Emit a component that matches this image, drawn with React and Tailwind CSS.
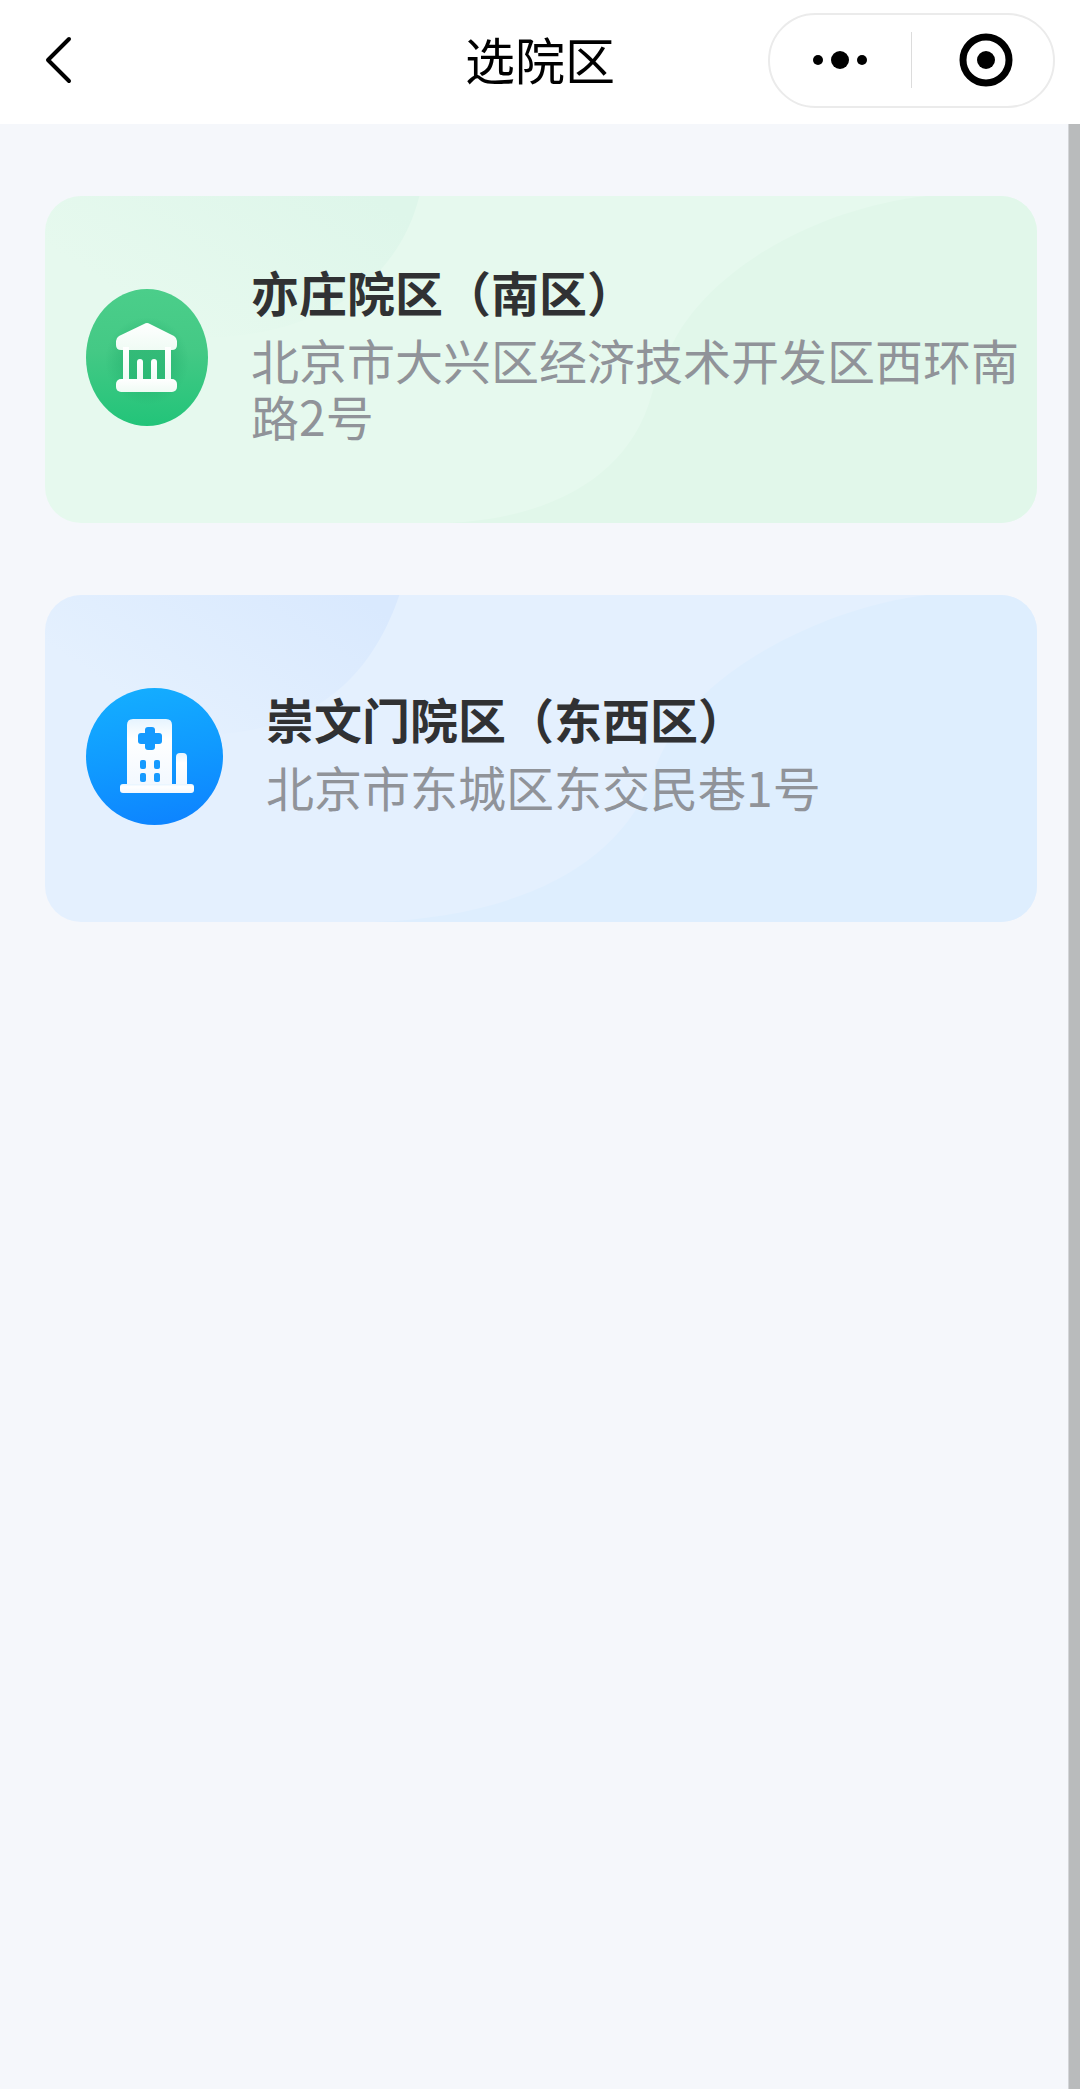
import React, { useState } from "react";

const BankIcon = () => (
  <svg
    viewBox="0 0 122 137"
    className="w-[122px] h-[137px] shrink-0"
    aria-hidden="true"
  >
    <defs>
      <linearGradient id="bankBg" x1="0" y1="0" x2="0" y2="1">
        <stop offset="0" stopColor="#4bce8a" />
        <stop offset="0.45" stopColor="#44c985" />
        <stop offset="1" stopColor="#22c479" />
      </linearGradient>
      <linearGradient id="bankFg" x1="0" y1="0" x2="0" y2="1">
        <stop offset="0" stopColor="#ffffff" />
        <stop offset="1" stopColor="#effbf4" />
      </linearGradient>
      <radialGradient id="bankShade">
        <stop offset="0.5" stopColor="#1fa968" stopOpacity="0.45" />
        <stop offset="1" stopColor="#1fa968" stopOpacity="0" />
      </radialGradient>
    </defs>
    <ellipse cx="61" cy="68.5" rx="61" ry="68.5" fill="url(#bankBg)" />
    <ellipse cx="61" cy="72" rx="42" ry="44" fill="url(#bankShade)" />
    <g fill="url(#bankFg)">
      <path d="M58 35 Q61 33 64 35 L88 47 Q91 49 91 52 V56 Q91 61 86 61 H35 Q30 61 30 56 V52 Q30 49 33 47 Z" />
      <rect x="37" y="58" width="6" height="36" />
      <rect x="79" y="58" width="6" height="36" />
      <path d="M51 92 V73 Q51 70 54 70 Q57 70 57 73 V92 Z" />
      <path d="M65 92 V73 Q65 70 68 70 Q71 70 71 73 V92 Z" />
      <rect x="30" y="90" width="61" height="13" rx="5" />
    </g>
  </svg>
);

const HospitalIcon = () => (
  <svg
    viewBox="0 0 137 137"
    className="w-[137px] h-[137px] shrink-0"
    aria-hidden="true"
  >
    <defs>
      <linearGradient id="hospitalBg" x1="0.4" y1="0" x2="0.6" y2="1">
        <stop offset="0" stopColor="#14adff" />
        <stop offset="0.5" stopColor="#109aff" />
        <stop offset="1" stopColor="#0d84ff" />
      </linearGradient>
      <linearGradient id="hospitalFg" x1="0" y1="0" x2="0" y2="1">
        <stop offset="0" stopColor="#e6f4ff" />
        <stop offset="0.3" stopColor="#ffffff" />
        <stop offset="1" stopColor="#f2f8ff" />
      </linearGradient>
    </defs>
    <circle cx="68.5" cy="68.5" r="68.5" fill="url(#hospitalBg)" />
    <g fill="url(#hospitalFg)">
      <path d="M41 98 V37 Q41 31 47 31 H80 Q86 31 86 37 V98 Z" />
      <path d="M90 98 V69 Q90 65 94 65 H97 Q101 65 101 69 V98 Z" />
      <rect x="34" y="96" width="74" height="9" rx="3" />
    </g>
    <g fill="#159aff">
      <rect x="59" y="39" width="10" height="23" rx="3" />
      <rect x="52" y="45" width="24" height="11" rx="3" />
      <rect x="54" y="72" width="6" height="9" rx="2" />
      <rect x="68" y="72" width="6" height="9" rx="2" />
      <rect x="54" y="85" width="6" height="9" rx="2" />
      <rect x="68" y="85" width="6" height="9" rx="2" />
    </g>
  </svg>
);

const campuses = [
  {
    id: "south",
    name: "亦庄院区（南区）",
    address: "北京市大兴区经济技术开发区西环南路2号",
    icon: BankIcon,
    card: "bg-[#e6f9ee]",
    wave: "#e1f7ea",
    corner: "#def6ea",
    cornerPath: "M0 0 H374 C352 88 272 142 150 142 H0 Z",
    wavePath:
      "M881 0 C770 12 660 75 625 152 C615 166 610 184 606 199 C585 276 512 322 402 327 H991 V0 Z",
  },
  {
    id: "east-west",
    name: "崇文门院区（东西区）",
    address: "北京市东城区东交民巷1号",
    icon: HospitalIcon,
    card: "bg-[#e4f0fe]",
    wave: "#deeefe",
    corner: "#d9e9fe",
    cornerPath: "M0 0 H354 C326 82 268 140 150 140 H0 Z",
    wavePath:
      "M881 0 C780 12 668 72 632 132 C618 150 612 166 604 188 C570 272 470 322 328 327 H991 V0 Z",
  },
];

const CampusCard = ({ campus, onSelect }) => {
  const Icon = campus.icon;

  return (
    <button
      type="button"
      onClick={() => onSelect(campus.id)}
      className={`relative overflow-hidden w-full min-h-[327px] rounded-[36px] pl-[41px] pr-4 pb-1 flex items-center gap-[43px] text-left ${campus.card}`}
    >
      {/* Card background */}
      <svg
        viewBox="0 0 991 327"
        preserveAspectRatio="none"
        className="absolute inset-0 w-full h-full"
        aria-hidden="true"
      >
        <defs>
          <linearGradient id={`corner-${campus.id}`} x1="0" y1="0.8" x2="1" y2="0.2">
            <stop offset="0.2" stopColor={campus.corner} stopOpacity="0" />
            <stop offset="1" stopColor={campus.corner} />
          </linearGradient>
        </defs>
        <path d={campus.cornerPath} fill={`url(#corner-${campus.id})`} />
        <path d={campus.wavePath} fill={campus.wave} />
      </svg>

      <div className="relative shrink-0">
        <Icon />
      </div>

      <div className="relative flex-1 pb-2.5 text-5xl leading-[56px]">
        <h2 className="font-bold text-[#303133] mb-3">{campus.name}</h2>
        <p className="text-[#909399]">{campus.address}</p>
      </div>
    </button>
  );
};

export default function App() {
  const [, setSelected] = useState(null);

  return (
    <div className="min-h-screen flex flex-col bg-[#f5f7fb] font-['Noto_Sans_CJK_SC',sans-serif]">
      {/* Nav bar */}
      <header className="h-[124px] bg-white grid grid-cols-3 items-center px-[25px] pb-1">
        <button type="button" aria-label="返回" className="justify-self-start p-4">
          <svg width="34" height="48" viewBox="0 0 34 48" fill="none">
            <path
              d="M28 3 L7 24 L28 45"
              stroke="#000"
              strokeWidth="4"
              strokeLinecap="round"
              strokeLinejoin="round"
            />
          </svg>
        </button>

        <h1 className="text-center text-[50px] leading-[56px] text-black pb-1">
          选院区
        </h1>

        <div className="justify-self-end w-[287px] h-[95px] flex items-center rounded-full border-2 border-[#ebebeb]">
          <button
            type="button"
            aria-label="更多"
            className="w-1/2 h-full flex items-center justify-center gap-2"
          >
            <span className="size-[10px] rounded-full bg-black" />
            <span className="size-[18px] rounded-full bg-black" />
            <span className="size-[10px] rounded-full bg-black" />
          </button>
          <span className="w-px h-14 shrink-0 bg-[#dcdcdc]" />
          <button
            type="button"
            aria-label="关闭"
            className="w-1/2 h-full flex items-center justify-center pl-2"
          >
            <svg width="54" height="54" viewBox="0 0 54 54">
              <circle cx="27" cy="27" r="23" fill="none" stroke="#000" strokeWidth="7" />
              <circle cx="27" cy="27" r="9" fill="#000" />
            </svg>
          </button>
        </div>
      </header>

      <div className="flex-1 flex">
        <main className="flex-1 flex flex-col gap-[72px] pt-[72px] pl-[45px] pr-[31px]">
          {campuses.map((campus) => (
            <CampusCard key={campus.id} campus={campus} onSelect={setSelected} />
          ))}
        </main>

        {/* Scrollbar */}
        <div className="w-3 bg-[#b9bbbc] border-l border-[#d3d5d8]" />
      </div>
    </div>
  );
}
